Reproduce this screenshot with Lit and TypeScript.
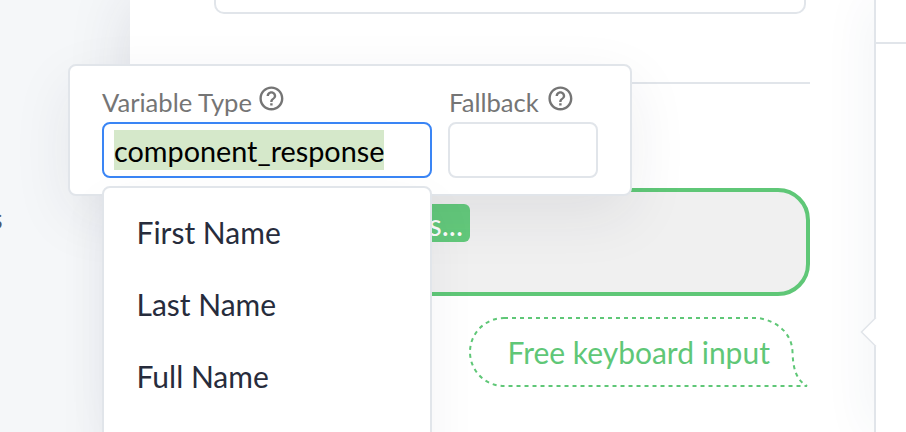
import { LitElement, html, css, svg } from "lit";
import { customElement, property } from "lit/decorators.js";

@customElement("help-icon")
export class HelpIcon extends LitElement {
  static styles = css`
    :host { display: block; width: 28.8px; height: 28.8px; color: #757575; }
    svg { display: block; width: 100%; height: 100%; fill: currentColor; }
  `;
  render() {
    return html`<svg viewBox="0 0 24 24" aria-hidden="true">
      <path d="M11 18h2v-2h-2v2zm1-16C6.48 2 2 6.48 2 12s4.48 10 10 10 10-4.48 10-10S17.52 2 12 2zm0 18c-4.41 0-8-3.59-8-8s3.59-8 8-8 8 3.59 8 8-3.59 8-8 8zm0-14c-2.21 0-4 1.79-4 4h2c0-1.1.9-2 2-2s2 .9 2 2c0 2-3 1.75-3 5h2c0-2.25 3-2.5 3-5 0-2.21-1.79-4-4-4z"/>
    </svg>`;
  }
}

@customElement("labeled-field")
export class LabeledField extends LitElement {
  @property() label = "";
  @property() value = "";
  @property({ type: Boolean, reflect: true }) focused = false;

  static styles = css`
    :host { display: flex; flex-direction: column; }
    .head { display: flex; height: 56px; box-sizing: border-box; padding: 18px 0 0 var(--label-inset, 0px); }
    .label { font-size: 25.6px; line-height: 37px; color: #757575; white-space: nowrap; }
    help-icon { margin: -0.4px 0 0 var(--icon-gap, 5.2px); }
    .box {
      box-sizing: border-box; height: 56px; padding: 6px 10px;
      border: 2px solid #e1e5ea; border-radius: 8px; background: #fff;
      font-size: 28.8px; line-height: 40px; color: #000;
    }
    :host([focused]) .box { border-color: #3a85f5; }
    .selection { display: inline-block; height: 40px; line-height: 43px; background: #d5e8ca; }
  `;
  render() {
    return html`
      <div class="head"><span class="label">${this.label}</span><help-icon></help-icon></div>
      <div class="box">${this.value ? html`<span class="selection">${this.value}</span>` : ""}</div>`;
  }
}

@customElement("app-root")
export class AppRoot extends LitElement {
  private options = ["First Name", "Last Name", "Full Name"];

  static styles = css`
    :host {
      display: block; position: relative; width: 906px; height: 432px; overflow: hidden;
      font-family: Lato, "Liberation Sans", sans-serif; background: #f5f7f9;
    }
    .page { display: flex; height: 100%; }
    .side { width: 130px; flex: none; box-sizing: border-box; padding-top: 199px; overflow: hidden; }
    .side-text { display: flex; justify-content: flex-end; width: 2.5px; font-size: 28px; line-height: 38px; color: #4c566c; }
    .main {
      width: 744px; flex: none; box-sizing: border-box; padding: 0 64px 0 80px; background: #fff;
      box-shadow: 0 0 60px rgba(40, 44, 70, 0.12);
      display: flex; flex-direction: column;
    }
    .card { height: 14px; flex: none; box-sizing: border-box; margin: 0 4px; border: 2px solid #e1e5ea; border-top: 0; border-radius: 0 0 10px 10px; }
    .rule { height: 2px; flex: none; margin-top: 68px; background: #e1e5ea; }
    .message {
      box-sizing: border-box; height: 108px; flex: none; margin-top: 104px; padding: 12px 16px;
      border: 4px solid #5fc777; border-radius: 32px; background: #f0f0f0;
    }
    .tag {
      box-sizing: border-box; width: 240px; height: 38px; padding-right: 7px; border-radius: 6px;
      background: #64cb7c; color: #fff; font-size: 30px; line-height: 41px; text-align: right; white-space: nowrap;
    }
    .bubble { position: relative; align-self: flex-end; width: 342px; height: 72px; margin-top: 20px; flex: none; }
    .bubble svg { display: block; width: 342px; height: 72px; fill: none; stroke: #5fc777; stroke-width: 2; stroke-dasharray: 4 4; }
    .bubble-text { position: absolute; left: 39.5px; top: 16px; font-size: 30px; line-height: 40px; color: #5fc777; white-space: nowrap; }
    .panel {
      position: relative; flex: 1; border-left: 2px solid #e1e5ea; background: #fff;
      box-shadow: 0 0 52px rgba(30, 60, 100, 0.08);
    }
    .panel-rule { height: 2px; margin-top: 42px; background: #e1e5ea; }
    .notch { position: absolute; left: -16px; top: 317px; width: 18px; height: 30px; display: block; }
    .popover {
      position: absolute; left: 68px; top: 64px; width: 564px; height: 132px; box-sizing: border-box;
      padding: 0 32px; display: flex; gap: 16px;
      border: 2px solid #e1e5ea; border-radius: 8px; background: #fff;
      box-shadow: 0 20px 60px rgba(40, 44, 70, 0.08);
    }
    .type { width: 330px; }
    .fallback { width: 150px; --label-inset: 1px; --icon-gap: 7px; }
    .menu {
      position: absolute; left: 102px; top: 186px; width: 330px; height: 300px; box-sizing: border-box;
      padding: 8px 32.500px; border: 2px solid #e1e5ea; border-radius: 8px; background: #fff;
      box-shadow: 0 20px 52px rgba(40, 44, 80, 0.05);
    }
    .option { height: 72px; font-size: 30px; line-height: 72px; color: #272c3c; white-space: nowrap; }
  `;

  render() {
    return html`
      <div class="page">
        <div class="side"><span class="side-text">s</span></div>
        <div class="main">
          <div class="card"></div>
          <div class="rule"></div>
          <div class="message"><div class="tag">res...</div></div>
          <div class="bubble">
            <svg viewBox="0 0 342 72" aria-hidden="true">
              ${svg`<path d="M36 2H290C310 5 324 18 324.500 36C325 52 328 64 339 70H36A34 34 0 0 1 36 2"/>`}
            </svg>
            <span class="bubble-text">Free keyboard input</span>
          </div>
        </div>
        <div class="panel">
          <svg class="notch" viewBox="0 0 18 30" aria-hidden="true">
            <path d="M18 0V30H16L1 15L16 0Z" fill="#fff"/>
            <path d="M16 0.500L1.500 15L16 29.500" fill="none" stroke="#e1e5ea" stroke-width="1.500"/>
          </svg>
          <div class="panel-rule"></div>
        </div>
      </div>
      <div class="popover">
        <labeled-field class="type" label="Variable Type" value="component_response" focused></labeled-field>
        <labeled-field class="fallback" label="Fallback"></labeled-field>
      </div>
      <div class="menu">${this.options.map((o) => html`<div class="option">${o}</div>`)}</div>`;
  }
}
